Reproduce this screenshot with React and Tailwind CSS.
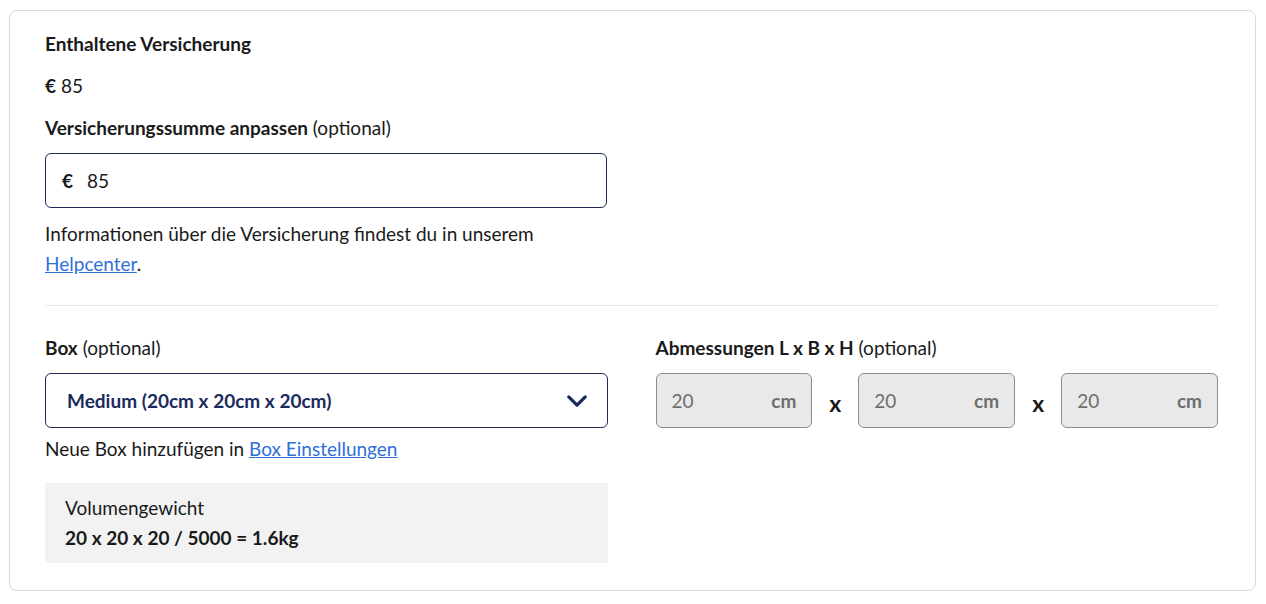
import React from "react";

const font = { fontFamily: "Lato, 'Noto Sans', sans-serif" };

const Chevron = () => (
  <svg width="22" height="22" viewBox="0 0 24 24" fill="none" stroke="currentColor" strokeWidth="3.5" strokeLinecap="round" strokeLinejoin="round">
    <polyline points="3 7.5 12 16.5 21 7.5" />
  </svg>
);

const DimInput = ({ value }) => (
  <div className="flex-1 h-[55px] rounded-md border border-[#8c8c8c] bg-[#e9e9e9] flex items-center justify-between px-[15px] text-[19px] text-[#6e6e6e]">
    <span>{value}</span>
    <span className="font-bold">cm</span>
  </div>
);

export default function App() {
  return (
    <div className="w-full min-h-screen bg-white pt-[10px] pl-[9px]" style={font}>
      <div className="w-[1247px] h-[581px] rounded-lg border border-[#d9d9d9] pl-[35px] pr-[37px] pt-[21px] text-[19px] leading-6 text-[#1a1a1a]">
        <div className="w-[562px] flex flex-col">
          <h2 className="font-bold">Enthaltene Versicherung</h2>
          <p className="mt-[18px]">
            <span className="font-bold">€</span> 85
          </p>
          <p className="mt-[18px]">
            <span className="font-bold">Versicherungssumme anpassen</span> (optional)
          </p>
          <div className="mt-[13px] h-[55px] rounded-md border border-[#1f2a56] flex items-center pl-[16px] gap-[14px]">
            <span className="font-bold">€</span>
            <span>85</span>
          </div>
          <p className="mt-[11px] leading-[30px]">
            Informationen über die Versicherung findest du in unserem{" "}
            <a href="#" className="text-[#2f6fd8] underline">Helpcenter</a>.
          </p>
        </div>

        <div className="mt-[26px] h-px bg-[#e6e6e6]" />

        <div className="mt-[30px] grid grid-cols-2 gap-x-12">
          <div className="flex flex-col">
            <p>
              <span className="font-bold">Box</span> (optional)
            </p>
            <div className="mt-[13px] h-[55px] rounded-md border border-[#1f2a56] flex items-center justify-between pl-[21px] pr-[19px] text-[#1b2a5c]">
              <span className="font-bold">Medium (20cm x 20cm x 20cm)</span>
              <Chevron />
            </div>
            <p className="mt-[9px]">
              Neue Box hinzufügen in{" "}
              <a href="#" className="text-[#2f6fd8] underline">Box Einstellungen</a>
            </p>
            <div className="mt-[22px] bg-[#f2f2f2] px-[20px] py-[10px] leading-[30px]">
              <p>Volumengewicht</p>
              <p className="font-bold">20 x 20 x 20 / 5000 = 1.6kg</p>
            </div>
          </div>
          <div className="flex flex-col">
            <p>
              <span className="font-bold">Abmessungen L x B x H</span> (optional)
            </p>
            <div className="mt-[13px] flex items-center">
              <DimInput value="20" />
              <span className="w-[46px] text-center font-bold text-[23px] pt-[5px]">x</span>
              <DimInput value="20" />
              <span className="w-[46px] text-center font-bold text-[23px] pt-[5px]">x</span>
              <DimInput value="20" />
            </div>
          </div>
        </div>
      </div>
    </div>
  );
}
